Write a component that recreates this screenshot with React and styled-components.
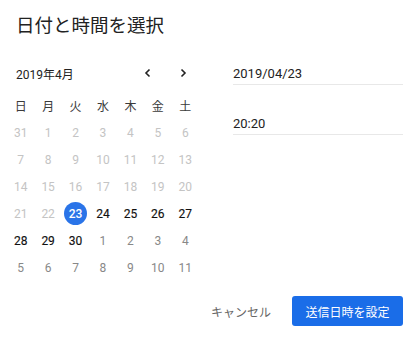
import React from 'react';
import styled, { createGlobalStyle } from 'styled-components';

const GlobalStyle = createGlobalStyle`
  body {
    margin: 0;
    background: #fff;
    font-family: Roboto, "Noto Sans CJK JP", sans-serif;
    color: #222;
  }
`;

const WEEKDAYS = ['日', '月', '火', '水', '木', '金', '土'];

const buildDays = () => {
  const days = [{ n: 31, kind: 'past' }];
  for (let i = 1; i <= 22; i++) days.push({ n: i, kind: 'past' });
  for (let i = 23; i <= 30; i++) days.push({ n: i, kind: i === 23 ? 'selected' : 'current' });
  for (let i = 1; i <= 11; i++) days.push({ n: i, kind: 'next' });
  return days;
};

const Chevron = ({ left }) => (
  <svg width="10" height="10" viewBox="0 0 10 10">
    <path
      d={left ? 'M6.5 1.5 L3 5 L6.5 8.5' : 'M3.5 1.5 L7 5 L3.5 8.5'}
      fill="none"
      stroke="#222"
      strokeWidth="1.6"
    />
  </svg>
);

const App = () => {
  const days = buildDays();

  return (
    <Dialog>
      <GlobalStyle />
      <Title>日付と時間を選択</Title>
      <Body>
        <Calendar>
          <MonthBar>
            <span>2019年4月</span>
            <NavButtons>
              <NavButton>
                <Chevron left />
              </NavButton>
              <NavButton>
                <Chevron />
              </NavButton>
            </NavButtons>
          </MonthBar>
          <Grid>
            {WEEKDAYS.map((w) => (
              <Weekday key={w}>{w}</Weekday>
            ))}
            {days.map((d, i) => (
              <Day key={i} $kind={d.kind}>
                <span>{d.n}</span>
              </Day>
            ))}
          </Grid>
        </Calendar>
        <Fields>
          <Field>2019/04/23</Field>
          <Field>20:20</Field>
        </Fields>
      </Body>
      <Footer>
        <TextButton>キャンセル</TextButton>
        <PrimaryButton>送信日時を設定</PrimaryButton>
      </Footer>
    </Dialog>
  );
};

const Dialog = styled.div`
  width: 416px;
  height: 338px;
  box-sizing: border-box;
  padding: 14px 13px 0 0;
`;

const Title = styled.h2`
  margin: 0 0 0 16px;
  font-family: Roboto, "Noto Sans CJK JP", sans-serif;
  font-size: 18.5px;
  font-weight: 400;
  line-height: 24px;
  color: #222;
`;

const Body = styled.div`
  display: flex;
  margin-top: 23px;
`;

const Calendar = styled.div`
  width: 192px;
  padding-left: 7px;
`;

const MonthBar = styled.div`
  display: flex;
  align-items: center;
  justify-content: space-between;
  height: 24px;
  padding-left: 9px;
  font-size: 12px;
  color: #222;
`;

const NavButtons = styled.div`
  display: flex;
  gap: 15px;
  margin-right: 6px;
`;

const NavButton = styled.button`
  display: flex;
  align-items: center;
  justify-content: center;
  width: 20px;
  height: 20px;
  padding: 0;
  border: none;
  background: none;
`;

const Grid = styled.div`
  display: grid;
  grid-template-columns: repeat(7, 1fr);
  grid-auto-rows: 27px;
  margin-top: 7px;
`;

const Weekday = styled.div`
  display: flex;
  align-items: center;
  justify-content: center;
  font-size: 12px;
  color: #3a3a3a;
`;

const dayColor = {
  past: '#c4c4c4',
  current: '#111',
  selected: '#fff',
  next: '#888',
};

const Day = styled.div`
  display: flex;
  align-items: center;
  justify-content: center;
  font-size: 12px;
  font-weight: ${(p) => (p.$kind === 'selected' ? 500 : 400)};
  -webkit-text-stroke: ${(p) => (p.$kind === 'current' ? '0.15px' : '0')};
  color: ${(p) => dayColor[p.$kind]};
  span {
    display: flex;
    align-items: center;
    justify-content: center;
    width: 23px;
    height: 23px;
    border-radius: 50%;
    background: ${(p) => (p.$kind === 'selected' ? '#2a74e8' : 'transparent')};
  }
`;

const Fields = styled.div`
  display: flex;
  flex-direction: column;
  gap: 29px;
  margin: 3px 0 0 34px;
  flex: 1;
`;

const Field = styled.div`
  height: 20px;
  line-height: 20px;
  font-size: 13px;
  color: #222;
  border-bottom: 1px solid #e8e8e8;
`;

const Footer = styled.div`
  display: flex;
  justify-content: flex-end;
  gap: 8px;
  margin-top: 15px;
`;

const TextButton = styled.button`
  height: 30px;
  padding: 0 13px;
  border: none;
  background: none;
  font-family: Roboto, "Noto Sans CJK JP", sans-serif;
  font-size: 12px;
  color: #666;
`;

const PrimaryButton = styled.button`
  width: 111px;
  height: 30px;
  padding: 0;
  border: none;
  border-radius: 3px;
  background: #1a6de8;
  font-family: Roboto, "Noto Sans CJK JP", sans-serif;
  font-size: 12px;
  color: #fff;
`;

export default App;
